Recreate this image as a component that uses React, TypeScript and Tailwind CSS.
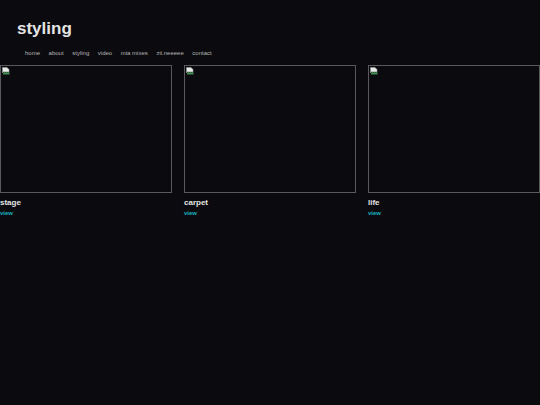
import React from 'react'

// 사진 카드 목록. 이미지가 아직 없어서 깨진 이미지 아이콘만 보인다.
const items = [
  { title: 'stage' },
  { title: 'carpet' },
  { title: 'life' },
]

const nav = ['home', 'about', 'styling', 'video', 'mia mixes', 'zii.neeeee', 'contact']

function BrokenImage() {
  return (
    <svg viewBox="0 0 8 8" className="absolute left-px top-px h-2 w-2">
      <path d="M0.5 0.5h4.5l2 2v3l-1 -1-1 1-1-1-1 1-1-1-1.5 1.5z" fill="#e8ece8" stroke="#9aa29a" strokeWidth="0.5" />
      <path d="M1 6.5l1.5-1.5 1 1 1-1 1 1 1-1 1 1v1.5h-6.5z" fill="#3f8f4f" />
    </svg>
  )
}

export default function App() {
  return (
    <div className="min-h-[405px] w-[540px] overflow-hidden bg-[#0b0b0f] font-['Liberation_Sans',Arial,sans-serif]">
      <header className="pl-[17px] pt-[19px]">
        <h1 className="text-[17px] font-bold leading-[20px] text-[#e4e4e4]">styling</h1>
        <nav className="mt-[10px] flex gap-[8.6px] pl-[8px] text-[6px] leading-[8px] text-[#b4b4b4]">
          {nav.map((n) => (
            <span key={n}>{n}</span>
          ))}
        </nav>
      </header>

      <main className="mt-[8px] flex gap-[12px]">
        {items.map((it) => (
          <div key={it.title} className="w-[172px] shrink-0">
            <div className="relative h-[128px] border border-[#58585d] bg-[#0b0b0f]">
              <BrokenImage />
            </div>
            <p className="mt-[5px] text-[8px] font-bold leading-[10px] text-[#e4e4e4]">{it.title}</p>
            <p className="mt-[1px] text-[6px] font-bold leading-[9px] text-[#19b2c0]">view</p>
          </div>
        ))}
      </main>
    </div>
  )
}
